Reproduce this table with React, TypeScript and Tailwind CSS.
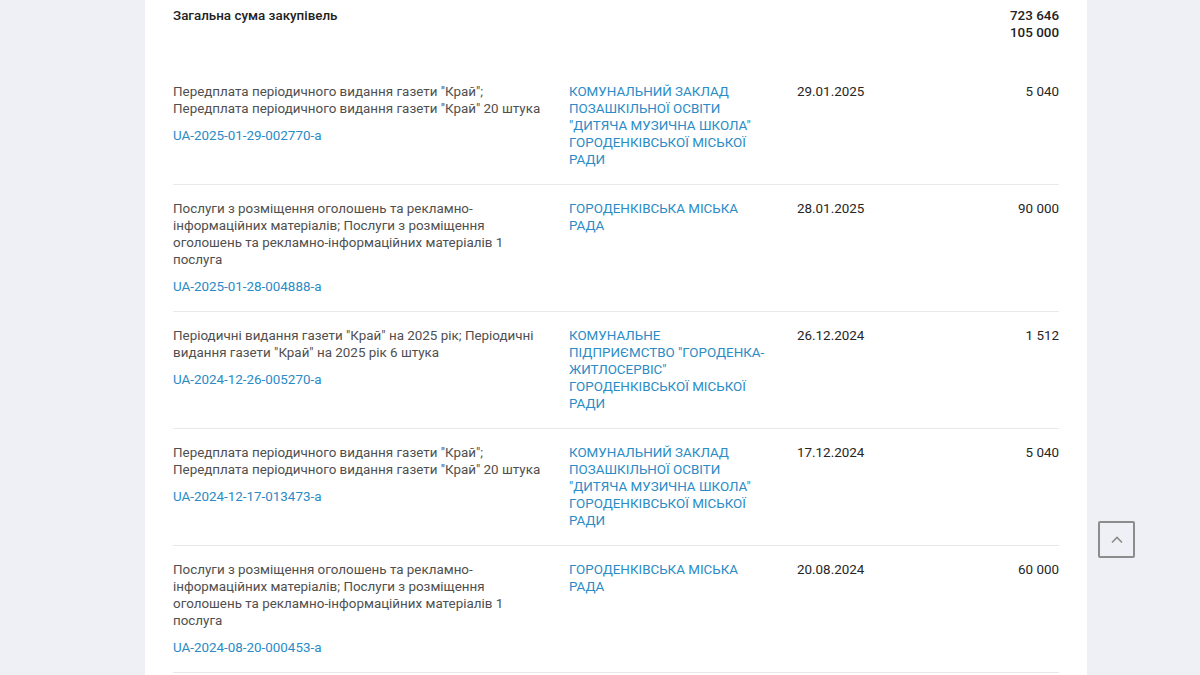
const rows = [
  {
    title: 'Передплата періодичного видання газети "Край"; Передплата періодичного видання газети "Край" 20 штука',
    id: "UA-2025-01-29-002770-a",
    org: 'КОМУНАЛЬНИЙ ЗАКЛАД ПОЗАШКІЛЬНОЇ ОСВІТИ "ДИТЯЧА МУЗИЧНА ШКОЛА" ГОРОДЕНКІВСЬКОЇ МІСЬКОЇ РАДИ',
    date: "29.01.2025",
    sum: "5 040",
  },
  {
    title: "Послуги з розміщення оголошень та рекламно-інформаційних матеріалів; Послуги з розміщення оголошень та рекламно-інформаційних матеріалів 1 послуга",
    id: "UA-2025-01-28-004888-a",
    org: "ГОРОДЕНКІВСЬКА МІСЬКА РАДА",
    date: "28.01.2025",
    sum: "90 000",
  },
  {
    title: 'Періодичні видання газети "Край" на 2025 рік; Періодичні видання газети "Край" на 2025 рік 6 штука',
    id: "UA-2024-12-26-005270-a",
    org: 'КОМУНАЛЬНЕ ПІДПРИЄМСТВО "ГОРОДЕНКА-ЖИТЛОСЕРВІС" ГОРОДЕНКІВСЬКОЇ МІСЬКОЇ РАДИ',
    date: "26.12.2024",
    sum: "1 512",
  },
  {
    title: 'Передплата періодичного видання газети "Край"; Передплата періодичного видання газети "Край" 20 штука',
    id: "UA-2024-12-17-013473-a",
    org: 'КОМУНАЛЬНИЙ ЗАКЛАД ПОЗАШКІЛЬНОЇ ОСВІТИ "ДИТЯЧА МУЗИЧНА ШКОЛА" ГОРОДЕНКІВСЬКОЇ МІСЬКОЇ РАДИ',
    date: "17.12.2024",
    sum: "5 040",
  },
  {
    title: "Послуги з розміщення оголошень та рекламно-інформаційних матеріалів; Послуги з розміщення оголошень та рекламно-інформаційних матеріалів 1 послуга",
    id: "UA-2024-08-20-000453-a",
    org: "ГОРОДЕНКІВСЬКА МІСЬКА РАДА",
    date: "20.08.2024",
    sum: "60 000",
  },
];

const App = () => {
  return (
    <div className="min-h-[675px] bg-[#eff0f5] font-['Roboto',sans-serif] text-[13.4px] leading-[17px]">
      <div className="w-[942px] ml-[145px] bg-white px-[28px]">
        {/* Total */}
        <div className="flex pt-[7px] pb-[42px]">
          <div className="flex-1 font-medium text-[#222]">Загальна сума закупівель</div>
          <div className="w-[64px] text-right font-medium text-[#222]">723 646 105 000</div>
        </div>

        {/* Tenders */}
        {rows.map((r, i) => (
          <div
            key={i}
            className={
              i === 0
                ? "flex pb-[16px] border-b border-[#e8e8e8]"
                : "flex pt-[15px] pb-[16px] border-b border-[#e8e8e8]"
            }
          >
            <div className="w-[374px] mr-[22px]">
              <div className="text-[#4f4f4f]">{r.title}</div>
              <a href="#" className="block mt-[10px] text-[#2a8bc6]">
                {r.id}
              </a>
            </div>
            <a href="#" className="w-[197px] mr-[31px] text-[#2a8bc6]">
              {r.org}
            </a>
            <div className="flex-1 text-[#262626]">{r.date}</div>
            <div className="w-[80px] text-right text-[#262626]">{r.sum}</div>
          </div>
        ))}
        <div className="h-[40px]" />
      </div>

      {/* Scroll to top */}
      <button className="fixed left-[1098px] top-[521px] flex h-[37px] w-[37px] items-center justify-center rounded-[2px] border-2 border-[#8c8c8c] bg-transparent">
        <svg width="12" height="8" viewBox="0 0 12 8" fill="none">
          <path d="M1 6.5L6 1.5L11 6.5" stroke="#8c8c8c" strokeWidth="1.6" />
        </svg>
      </button>
    </div>
  );
};

export default App;
